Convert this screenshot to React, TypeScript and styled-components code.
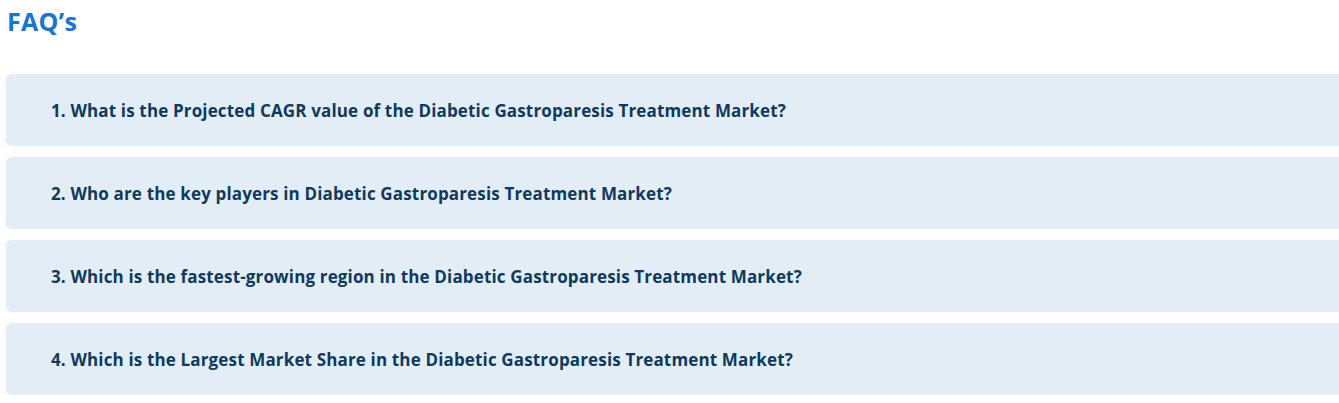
import React from "react";
import styled, { createGlobalStyle } from "styled-components";

const Global = createGlobalStyle`
  html, body { margin: 0; padding: 0; background: #ffffff; overflow: hidden; }
  body { font-family: "Open Sans", "Noto Sans", sans-serif; }
`;

const Page = styled.section`
  padding: 4px 0 0 6px;
  width: 1345px;
`;

const Title = styled.h2`
  margin: 0 0 36px 1px;
  font-family: "Open Sans", sans-serif;
  font-weight: 700;
  font-size: 25px;
  line-height: 34px;
  letter-spacing: 0.3px;
  color: #1a75d2;
`;

const List = styled.div`
  display: flex;
  flex-direction: column;
  gap: 11px;
`;

const Item = styled.div`
  height: 72px;
  display: flex;
  align-items: center;
  padding-left: 45px;
  background: #e3edf6;
  border-radius: 6px;
  box-shadow: -2px 0 6px rgba(0, 0, 0, 0.03);
`;

const Question = styled.h3`
  margin: 0;
  font-family: "Open Sans", sans-serif;
  font-weight: 700;
  font-size: 17px;
  letter-spacing: 0.15px;
  color: #0e3a5d;
`;

const questions = [
  "1. What is the Projected CAGR value of the Diabetic Gastroparesis Treatment Market?",
  "2. Who are the key players in Diabetic Gastroparesis Treatment Market?",
  "3. Which is the fastest-growing region in the Diabetic Gastroparesis Treatment Market?",
  "4. Which is the Largest Market Share in the Diabetic Gastroparesis Treatment Market?",
];

export default function App() {
  return (
    <>
      <Global />
      <Page>
        <Title>FAQ’s</Title>
        <List>
          {questions.map((q) => (
            <Item key={q}>
              <Question>{q}</Question>
            </Item>
          ))}
        </List>
      </Page>
    </>
  );
}
